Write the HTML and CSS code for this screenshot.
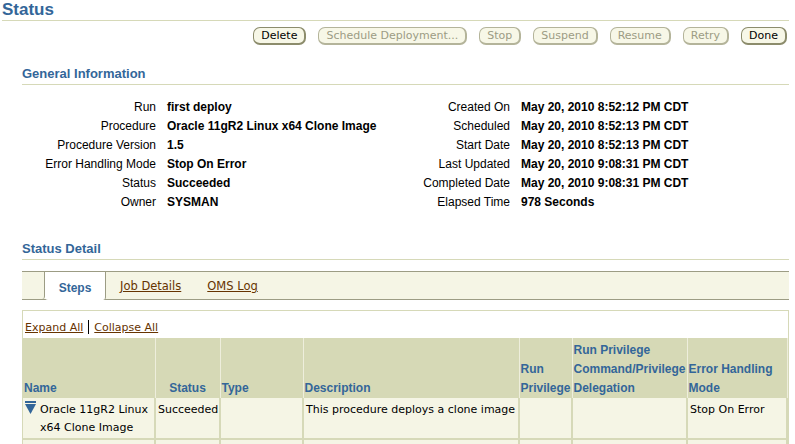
FILE: index.html
```html
<!DOCTYPE html>
<html lang="en">
<head>
    <meta charset="UTF-8">
    <title>Status</title>
    <link rel="stylesheet" href="styles.css">
</head>
<body>
    <h1 class="page-title">Status</h1>
    <div class="button-bar">
        <button class="btn">Delete</button>
        <button class="btn" disabled>Schedule Deployment...</button>
        <button class="btn" disabled>Stop</button>
        <button class="btn" disabled>Suspend</button>
        <button class="btn" disabled>Resume</button>
        <button class="btn" disabled>Retry</button>
        <button class="btn">Done</button>
    </div>

    <div class="section">
        <h2 class="section-title">General Information</h2>
        <div class="info-grid">
            <span class="label">Run</span><span class="value">first deploy</span>
            <span class="label">Created On</span><span class="value">May 20, 2010 8:52:12 PM CDT</span>
            <span class="label">Procedure</span><span class="value">Oracle 11gR2 Linux x64 Clone Image</span>
            <span class="label">Scheduled</span><span class="value">May 20, 2010 8:52:13 PM CDT</span>
            <span class="label">Procedure Version</span><span class="value">1.5</span>
            <span class="label">Start Date</span><span class="value">May 20, 2010 8:52:13 PM CDT</span>
            <span class="label">Error Handling Mode</span><span class="value">Stop On Error</span>
            <span class="label">Last Updated</span><span class="value">May 20, 2010 9:08:31 PM CDT</span>
            <span class="label">Status</span><span class="value">Succeeded</span>
            <span class="label">Completed Date</span><span class="value">May 20, 2010 9:08:31 PM CDT</span>
            <span class="label">Owner</span><span class="value">SYSMAN</span>
            <span class="label">Elapsed Time</span><span class="value">978 Seconds</span>
        </div>

        <h2 class="section-title detail-title">Status Detail</h2>
        <div class="tab-bar">
            <span class="tab-spacer"></span>
            <span class="tab active">Steps</span>
            <a class="tab" href="#">Job Details</a>
            <a class="tab" href="#">OMS Log</a>
        </div>

        <div class="steps-box">
            <div class="tree-links">
                <a href="#">Expand All</a><span class="sep"></span><a href="#">Collapse All</a>
            </div>
            <table class="steps">
                <colgroup>
                    <col style="width:132px">
                    <col style="width:65px">
                    <col style="width:83px">
                    <col style="width:216px">
                    <col style="width:53px">
                    <col style="width:115px">
                    <col>
                </colgroup>
                <thead>
                    <tr>
                        <th>Name</th>
                        <th class="center">Status</th>
                        <th>Type</th>
                        <th>Description</th>
                        <th>Run Privilege</th>
                        <th>Run Privilege Command/Privilege Delegation</th>
                        <th>Error Handling Mode</th>
                    </tr>
                </thead>
                <tbody>
                    <tr>
                        <td>
                            <div class="name-cell">
                                <svg class="toggle" width="11" height="13" viewBox="0 0 11 13">
                                    <rect x="0" y="0" width="11" height="2" fill="#336699"/>
                                    <polygon points="0,3 11,3 5.5,13" fill="#336699"/>
                                </svg>
                                <span>Oracle 11gR2 Linux x64 Clone Image</span>
                            </div>
                        </td>
                        <td>Succeeded</td>
                        <td></td>
                        <td>This procedure deploys a clone image</td>
                        <td></td>
                        <td></td>
                        <td>Stop On Error</td>
                    </tr>
                    <tr class="filler">
                        <td></td><td></td><td></td><td></td><td></td><td></td><td></td>
                    </tr>
                </tbody>
            </table>
        </div>
    </div>
</body>
</html>
```

FILE: styles.css
```css
body {
    margin: 0;
    font-family: "Liberation Sans", Arial, sans-serif;
    font-size: 12px;
    color: #000;
    background-color: #fff;
    overflow: hidden;
}

.page-title {
    margin: 0 6px 0 2px;
    padding-top: 1px;
    height: 19px;
    font-size: 17px;
    font-weight: bold;
    color: #336699;
    line-height: 17px;
    border-bottom: 1px solid #d6d9b8;
}

.button-bar {
    display: flex;
    justify-content: flex-end;
    gap: 12px;
    padding: 6px 8px 0 0;
}

.btn {
    font-family: "DejaVu Sans", sans-serif;
    font-size: 11px;
    height: 18px;
    padding: 0 7px;
    color: #000;
    background-color: #f7f7e7;
    border: 1px solid #8c8c6c;
    border-right-width: 2px;
    border-bottom-width: 2px;
    border-radius: 7px;
    line-height: 14px;
}

.btn:disabled {
    color: #9c9c84;
    border-color: #b4b49a;
}

.section {
    margin: 0 6px 0 22px;
}

.section-title {
    margin: 0;
    padding-top: 21px;
    font-size: 13px;
    font-weight: bold;
    color: #336699;
    line-height: 15px;
    border-bottom: 1px solid #d6d9b8;
    padding-bottom: 3px;
}

.info-grid {
    display: grid;
    grid-template-columns: 134px 222px 110px 1fr;
    column-gap: 11px;
    grid-auto-rows: 19px;
    align-items: center;
    padding-top: 12px;
    white-space: nowrap;
}

.label {
    text-align: right;
}

.value {
    font-weight: bold;
}

.detail-title {
    padding-top: 30px;
}

.tab-bar {
    display: flex;
    align-items: stretch;
    height: 27px;
    margin-top: 11px;
    background-color: #f5f5e5;
    border-top: 1px solid #9c9c84;
    border-bottom: 1px solid #9c9c84;
}

.tab-spacer {
    width: 22px;
    border-right: 1px solid #9c9c84;
    border-bottom-right-radius: 3px;
}

.tab {
    display: flex;
    align-items: center;
    padding: 1px 12px 0 14px;
    font-family: "DejaVu Sans", sans-serif;
    font-size: 11.5px;
    color: #663300;
}

.tab.active {
    font-family: "Liberation Sans", Arial, sans-serif;
    font-size: 12px;
    font-weight: bold;
    color: #336699;
    background-color: #fff;
    width: 60px;
    justify-content: center;
    padding: 3px 0 0 0;
    margin-bottom: -1px;
    border-right: 1px solid #9c9c84;
    border-bottom-left-radius: 3px;
    border-bottom-right-radius: 3px;
}

.steps-box {
    margin-top: 10px;
    border: 1px solid #d6d9b8;
    border-bottom: none;
}

.tree-links {
    display: flex;
    align-items: center;
    height: 22px;
    padding: 5px 0 0 2px;
    font-family: "DejaVu Sans", sans-serif;
    font-size: 11px;
}

.tree-links a {
    color: #663300;
}

.sep {
    width: 1px;
    height: 14px;
    margin: 0 5px;
    background-color: #000;
}

.steps {
    width: 100%;
    table-layout: fixed;
    border-collapse: collapse;
}

.steps th {
    height: 60px;
    padding: 0 1px 0 1px;
    text-align: left;
    vertical-align: bottom;
    font-weight: bold;
    color: #336699;
    line-height: 19px;
    background-color: #d6d9b6;
    border-right: 1px solid #eeeedc;
}

.steps th.center {
    text-align: center;
}

.steps td {
    padding: 3px 2px 1px 2px;
    height: 36px;
    vertical-align: top;
    font-family: "DejaVu Sans", sans-serif;
    font-size: 11px;
    line-height: 18px;
    background-color: #f5f5e5;
    border-right: 2px solid #d6d9b8;
    border-bottom: 2px solid #d6d9b8;
}

.steps tr.filler td {
    height: 10px;
}

.name-cell {
    display: flex;
    align-items: flex-start;
    gap: 4px;
}

.toggle {
    flex: none;
    margin-top: 0;
}
```
